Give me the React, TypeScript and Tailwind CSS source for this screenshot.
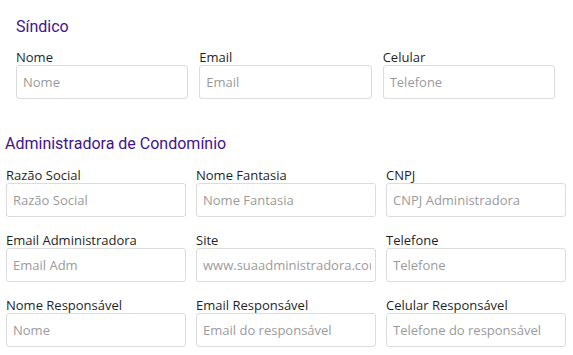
const label = "block pt-[3px] text-[13px] leading-[16px] text-[#1f1f1f] font-['Open_Sans',sans-serif]";
const input =
  "block w-full h-[34px] min-w-0 rounded-[3px] border border-[#dcdcdc] bg-white pl-[6px] pr-1 text-[13px] text-[#333] font-['Open_Sans',sans-serif] placeholder:text-[#9b9b9b] outline-none";
const heading = "text-[16px] leading-[24px] text-[#42148a] font-['Roboto',sans-serif]";

type Field = { label: string; placeholder: string };

const Fields = ({ fields }: { fields: Field[] }) => (
  <>
    {fields.map((f) => (
      <div key={f.label} className="min-w-0">
        <label className={label}>{f.label}</label>
        <input className={input} placeholder={f.placeholder} />
      </div>
    ))}
  </>
);

export default function App() {
  return (
    <div className="w-[573px] h-[355px] bg-white overflow-hidden">
      <section className="ml-4 w-[539px] pt-[15px]">
        <h2 className={heading}>Síndico</h2>
        <div className="mt-[7px] grid grid-cols-3 gap-x-[11px]">
          <Fields
            fields={[
              { label: "Nome", placeholder: "Nome" },
              { label: "Email", placeholder: "Email" },
              { label: "Celular", placeholder: "Telefone" },
            ]}
          />
        </div>
      </section>
      <section className="ml-[6px] w-[560px] mt-[33px]">
        <h2 className={heading + " -ml-[1px]"}>Administradora de Condomínio</h2>
        <div className="mt-[8px] grid grid-cols-3 gap-x-[10px] gap-y-3">
          <Fields
            fields={[
              { label: "Razão Social", placeholder: "Razão Social" },
              { label: "Nome Fantasia", placeholder: "Nome Fantasia" },
              { label: "CNPJ", placeholder: "CNPJ Administradora" },
              { label: "Email Administradora", placeholder: "Email Adm" },
              { label: "Site", placeholder: "www.suaadministradora.com.br" },
              { label: "Telefone", placeholder: "Telefone" },
              { label: "Nome Responsável", placeholder: "Nome" },
              { label: "Email Responsável", placeholder: "Email do responsável" },
              { label: "Celular Responsável", placeholder: "Telefone do responsável" },
            ]}
          />
        </div>
      </section>
    </div>
  );
}
